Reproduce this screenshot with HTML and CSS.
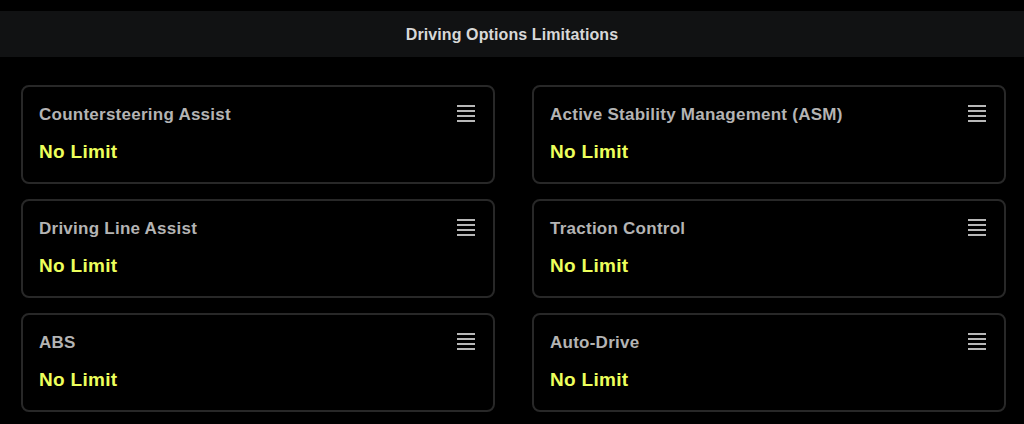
FILE: index.html
```html
<!DOCTYPE html>
<html>
<head>
<meta charset="utf-8">
<link rel="stylesheet" href="styles.css">
</head>
<body>
<div class="page">
  <header class="titlebar">Driving Options Limitations</header>
  <main class="grid">
    <div class="card">
      <div class="row"><span class="label">Countersteering Assist</span><span class="menu"><i></i><i></i><i></i><i></i></span></div>
      <div class="value">No Limit</div>
    </div>
    <div class="card">
      <div class="row"><span class="label">Active Stability Management (ASM)</span><span class="menu"><i></i><i></i><i></i><i></i></span></div>
      <div class="value">No Limit</div>
    </div>
    <div class="card">
      <div class="row"><span class="label">Driving Line Assist</span><span class="menu"><i></i><i></i><i></i><i></i></span></div>
      <div class="value">No Limit</div>
    </div>
    <div class="card">
      <div class="row"><span class="label">Traction Control</span><span class="menu"><i></i><i></i><i></i><i></i></span></div>
      <div class="value">No Limit</div>
    </div>
    <div class="card">
      <div class="row"><span class="label">ABS</span><span class="menu"><i></i><i></i><i></i><i></i></span></div>
      <div class="value">No Limit</div>
    </div>
    <div class="card">
      <div class="row"><span class="label">Auto-Drive</span><span class="menu"><i></i><i></i><i></i><i></i></span></div>
      <div class="value">No Limit</div>
    </div>
  </main>
</div>
</body>
</html>
```
FILE: styles.css
```css
html, body {
  margin: 0;
  padding: 0;
  background: #000;
}
body {
  width: 1024px;
  height: 424px;
  overflow: hidden;
  font-family: "Liberation Sans", Arial, sans-serif;
}
.page {
  padding-top: 11px;
}
.titlebar {
  box-sizing: border-box;
  height: 46px;
  padding-top: 2px;
  background: #111213;
  color: #d8d8d8;
  font-weight: bold;
  font-size: 16px;
  letter-spacing: 0.1px;
  display: flex;
  align-items: center;
  justify-content: center;
}
.grid {
  display: grid;
  grid-template-columns: 474px 474px;
  column-gap: 37px;
  row-gap: 15px;
  padding: 28px 18px 0 21px;
}
.card {
  box-sizing: border-box;
  height: 99px;
  border: 2px solid #282828;
  border-radius: 8px;
  padding: 18px 18px 0 16px;
}
.row {
  display: flex;
  justify-content: space-between;
  align-items: flex-start;
  height: 20px;
}
.label {
  color: #b4b4b4;
  font-weight: bold;
  font-size: 17px;
  letter-spacing: 0.25px;
  line-height: 20px;
}
.menu {
  display: flex;
  flex-direction: column;
  gap: 3px;
  width: 18px;
  padding-top: 0;
}
.menu i {
  display: block;
  height: 2px;
  background: #b8b8b8;
}
.value {
  margin-top: 16px;
  color: #edff5c;
  font-weight: bold;
  font-size: 19px;
  letter-spacing: 0.3px;
  line-height: 22px;
}
```
